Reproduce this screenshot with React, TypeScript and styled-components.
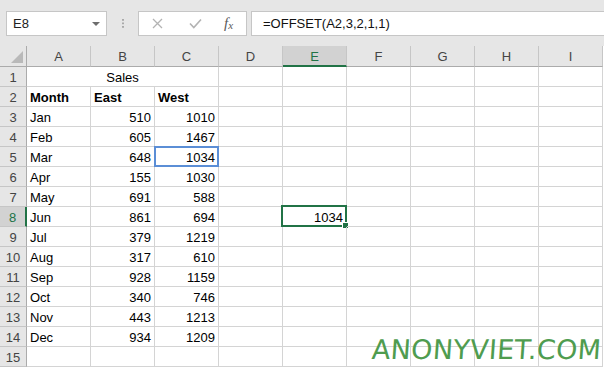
import React from "react";
import styled, { createGlobalStyle, css } from "styled-components";

const GREEN = "#217346";

const GlobalStyle = createGlobalStyle`
  html, body {
    margin: 0;
    padding: 0;
    background: #fff;
    overflow: hidden;
  }
  body {
    font-family: "Liberation Sans", Arial, sans-serif;
    font-size: 13px;
    color: #000;
  }
`;

const columns = ["A", "B", "C", "D", "E", "F", "G", "H", "I"];

const rows: (string | number)[][] = [
  ["Jan", 510, 1010],
  ["Feb", 605, 1467],
  ["Mar", 648, 1034],
  ["Apr", 155, 1030],
  ["May", 691, 588],
  ["Jun", 861, 694],
  ["Jul", 379, 1219],
  ["Aug", 317, 610],
  ["Sep", 928, 1159],
  ["Oct", 340, 746],
  ["Nov", 443, 1213],
  ["Dec", 934, 1209],
];

export default function App() {
  const selCol = "E";
  const selRow = 8;

  const renderRow = (rowNum: number) => {
    const cells: React.ReactNode[] = [];
    cells.push(
      <RowHeader key={`h${rowNum}`} $selected={rowNum === selRow}>
        {rowNum}
      </RowHeader>
    );

    if (rowNum === 1) {
      cells.push(
        <Cell key="a1" $span={3} $align="center">
          Sales
        </Cell>
      );
      columns.slice(3).forEach((c) => cells.push(<Cell key={`${c}1`} />));
      return cells;
    }

    if (rowNum === 2) {
      ["Month", "East", "West"].forEach((t) =>
        cells.push(
          <Cell key={t} $bold>
            {t}
          </Cell>
        )
      );
      columns.slice(3).forEach((c) => cells.push(<Cell key={`${c}2`} />));
      return cells;
    }

    const data = rows[rowNum - 3];
    columns.forEach((c, i) => {
      let content: React.ReactNode = null;
      let align: "left" | "right" | "center" = "left";
      if (data && i < 3) {
        content = data[i];
        align = typeof data[i] === "number" ? "right" : "left";
      }
      if (c === selCol && rowNum === selRow) {
        cells.push(
          <Cell key={`${c}${rowNum}`} $align="right">
            1034
            <ActiveBox>
              <FillHandle />
            </ActiveBox>
          </Cell>
        );
        return;
      }
      cells.push(
        <Cell key={`${c}${rowNum}`} $align={align}>
          {content}
          {c === "C" && rowNum === 5 && <RefBox />}
        </Cell>
      );
    });
    return cells;
  };

  return (
    <>
      <GlobalStyle />
      <TopBar>
        <NameBox>
          <NameText>E8</NameText>
          <DropArrow />
        </NameBox>
        <Grip />
        <FxButtons>
          <IconSlot>
            <svg width="11" height="11" viewBox="0 0 11 11">
              <path d="M1 1 L10 10 M10 1 L1 10" stroke="#b3b3b3" strokeWidth="1.3" fill="none" />
            </svg>
          </IconSlot>
          <IconSlot>
            <svg width="13" height="11" viewBox="0 0 13 11">
              <path d="M1 5.5 L4.8 9.5 L12 1.5" stroke="#b3b3b3" strokeWidth="1.6" fill="none" />
            </svg>
          </IconSlot>
          <FxLabel>
            f<sub>x</sub>
          </FxLabel>
        </FxButtons>
        <FormulaInput>=OFFSET(A2,3,2,1,1)</FormulaInput>
      </TopBar>

      <Sheet>
        <Corner>
          <CornerTriangle />
        </Corner>
        {columns.map((c) => (
          <ColHeader key={c} $selected={c === selCol}>
            {c}
          </ColHeader>
        ))}
        {Array.from({ length: 15 }, (_, i) => renderRow(i + 1))}
      </Sheet>

      <Watermark>ANONYVIET.COM</Watermark>
    </>
  );
}

const TopBar = styled.div`
  height: 46px;
  background: #e6e6e6;
  display: flex;
  align-items: flex-start;
  padding-top: 11px;
  padding-left: 6px;
  box-sizing: border-box;
`;

const boxed = css`
  height: 25px;
  box-sizing: border-box;
  background: #fff;
  border: 1px solid #c6c6c6;
  display: flex;
  align-items: center;
`;

const NameBox = styled.div`
  ${boxed};
  width: 101px;
  padding: 0 6px 0 6px;
  justify-content: space-between;
`;

const NameText = styled.span`
  font-size: 13px;
  color: #222;
`;

const DropArrow = styled.span`
  width: 0;
  height: 0;
  border-left: 4px solid transparent;
  border-right: 4px solid transparent;
  border-top: 4px solid #6d6d6d;
`;

const Grip = styled.div`
  width: 2px;
  height: 9px;
  margin: 8px 14px 0 15px;
  background-image: linear-gradient(#a9a9a9 50%, transparent 50%);
  background-size: 2px 3.5px;
`;

const FxButtons = styled.div`
  ${boxed};
  width: 109px;
  padding: 0 0 0 13px;
`;

const IconSlot = styled.span`
  width: 37px;
  display: flex;
  align-items: center;
  justify-content: flex-start;
`;

const FxLabel = styled.span`
  font-family: "Liberation Serif", "Times New Roman", serif;
  font-style: italic;
  font-size: 15px;
  color: #5a5a5a;
  margin-left: -2px;
  line-height: 1;

  sub {
    font-size: 11px;
    vertical-align: -1px;
  }
`;

const FormulaInput = styled.div`
  ${boxed};
  flex: 1;
  margin-left: 4px;
  border-right: none;
  padding-left: 11px;
  font-size: 13px;
  color: #111;
`;

const Sheet = styled.div`
  display: grid;
  grid-template-columns: 27px repeat(9, 64px);
  grid-template-rows: 21px repeat(15, 20px);
`;

const headerBase = css`
  background: #e6e6e6;
  color: #444;
  font-size: 13px;
  box-sizing: border-box;
  display: flex;
  align-items: center;
  justify-content: center;
`;

const Corner = styled.div`
  ${headerBase};
  border-right: 1px solid #ababab;
  border-bottom: 1px solid #ababab;
  position: relative;
`;

const CornerTriangle = styled.span`
  position: absolute;
  right: 3px;
  bottom: 3px;
  width: 0;
  height: 0;
  border-left: 12px solid transparent;
  border-bottom: 12px solid #b9b9b9;
`;

const ColHeader = styled.div<{ $selected?: boolean }>`
  ${headerBase};
  border-right: 1px solid #c6c6c6;
  border-bottom: 1px solid #ababab;
  padding-top: 1px;
  ${(p) =>
    p.$selected &&
    css`
      background: #d2d2d2;
      color: ${GREEN};
      border-bottom: 2px solid ${GREEN};
    `}
`;

const RowHeader = styled.div<{ $selected?: boolean }>`
  ${headerBase};
  grid-column: 1;
  border-right: 1px solid #ababab;
  border-bottom: 1px solid #c6c6c6;
  padding-top: 1px;
  ${(p) =>
    p.$selected &&
    css`
      background: #d2d2d2;
      color: ${GREEN};
      border-right: 2px solid ${GREEN};
    `}
`;

const Cell = styled.div<{ $align?: "left" | "right" | "center"; $bold?: boolean; $span?: number }>`
  position: relative;
  box-sizing: border-box;
  border-right: 1px solid #d4d4d4;
  border-bottom: 1px solid #d4d4d4;
  padding: 2px 3px 0 3px;
  line-height: 17px;
  white-space: nowrap;
  text-align: ${(p) => p.$align || "left"};
  font-weight: ${(p) => (p.$bold ? 700 : 400)};
  grid-column: ${(p) => (p.$span ? `span ${p.$span}` : "auto")};
`;

const ActiveBox = styled.span`
  position: absolute;
  left: -2px;
  top: -2px;
  right: -1px;
  bottom: -1px;
  border: 2px solid ${GREEN};
  pointer-events: none;
`;

const FillHandle = styled.span`
  position: absolute;
  right: -4px;
  bottom: -4px;
  width: 5px;
  height: 5px;
  background: ${GREEN};
  border: 1px solid #fff;
`;

const RefBox = styled.span`
  position: absolute;
  left: -1px;
  top: -1px;
  right: -1px;
  bottom: -1px;
  border: 2px solid #5b8ed6;
  pointer-events: none;
`;

const Watermark = styled.div`
  position: absolute;
  left: 372px;
  top: 336px;
  font-family: "DejaVu Sans", sans-serif;
  font-size: 27px;
  letter-spacing: 0.3px;
  color: #4f9c4f;
  white-space: nowrap;
  line-height: 1;
  transform: skewX(-4deg);
`;
